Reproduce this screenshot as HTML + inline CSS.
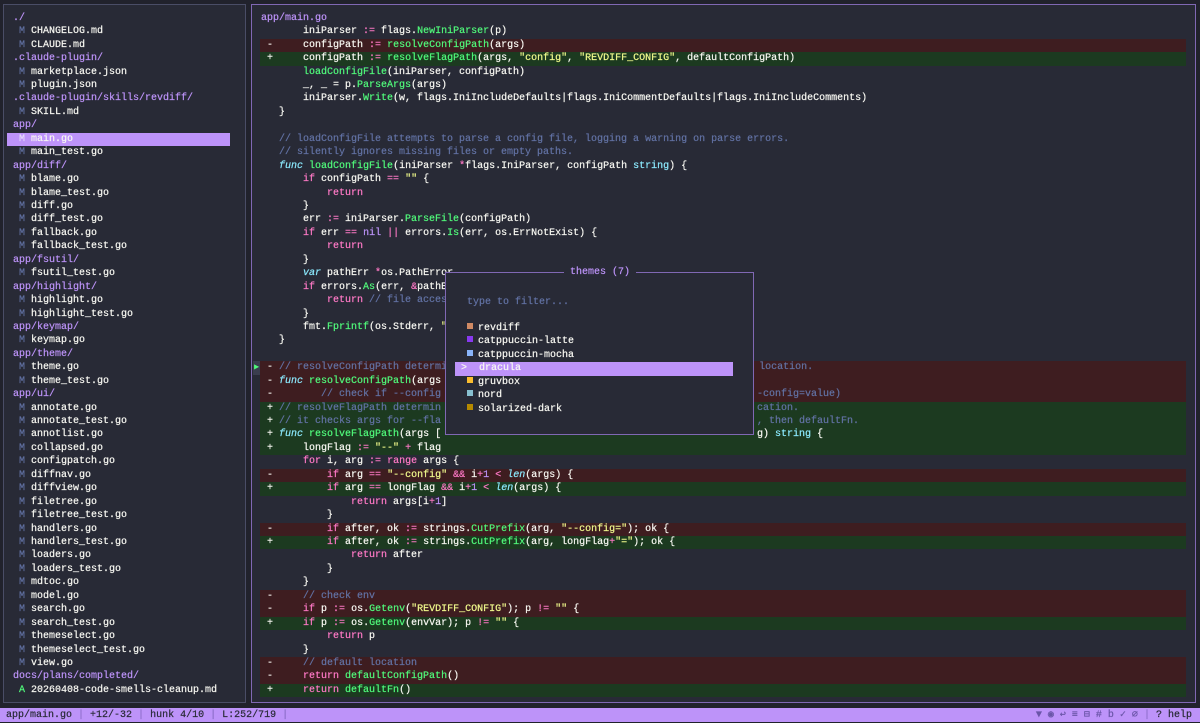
<!DOCTYPE html>
<html><head><meta charset="utf-8">
<style>
*{margin:0;padding:0;box-sizing:border-box}
body{width:1200px;height:722px;background:#21222c;position:relative;overflow:hidden;font-family:"Liberation Mono","DejaVu Sans Mono",monospace;font-size:10px;color:#f8f8f2;-webkit-text-stroke:0.2px}
.panel{position:absolute;background:#282a36}
#lp{left:3px;top:4px;width:243px;height:699px;border:1px solid #4a4d66}
#rp{left:251px;top:4px;width:945px;height:699px;border:1.5px solid #8068b4}
.r{position:absolute;height:13.44px;line-height:13.44px;white-space:pre;margin-top:1.5px}
.lr{left:7px;width:223px;padding-left:6px}
.cr{left:260px;width:926px;padding-left:1px}
.del{background:#3e1d20}
.add{background:#1c3a20}
.sel{background:#bd93f9;color:#f8f8f2}
.d{color:#bd93f9}
.m{color:#6272a4}
.a{color:#50fa7b}
.k{color:#ff79c6}
.f{color:#50fa7b}
.s{color:#f1fa8c}
.c{color:#6272a4}
.t{color:#8be9fd;font-style:italic}
.ty{color:#8be9fd}
.n{color:#bd93f9}
.suf{position:absolute;top:0}
#pop{position:absolute;left:445px;top:272px;width:309px;height:163px;border:1px solid #8068b4;background:#282a36}
#pt{position:absolute;left:118px;top:-7px;padding:0 6px;background:#282a36;color:#bd93f9;line-height:13px}
.pi{position:absolute;left:9px;width:278px;height:13.44px;line-height:13.44px;white-space:pre;margin-top:1.5px}
.sq{display:inline-block;width:6px;height:6px;margin:0 5px 0 12px;vertical-align:1px}
#sb{position:absolute;left:0;top:708px;width:1200px;height:14px;background:#bd93f9;color:#282a36;line-height:15px;white-space:pre}
</style></head><body>
<div class="panel" id="lp"></div>
<div class="panel" id="rp"></div>

<!-- left tree -->
<div class="r lr d" style="top:10.3px">./</div>
<div class="r lr" style="top:23.7px"> <span class="m">M</span> CHANGELOG.md</div>
<div class="r lr" style="top:37.2px"> <span class="m">M</span> CLAUDE.md</div>
<div class="r lr d" style="top:50.6px">.claude-plugin/</div>
<div class="r lr" style="top:64.1px"> <span class="m">M</span> marketplace.json</div>
<div class="r lr" style="top:77.5px"> <span class="m">M</span> plugin.json</div>
<div class="r lr d" style="top:90.9px">.claude-plugin/skills/revdiff/</div>
<div class="r lr" style="top:104.4px"> <span class="m">M</span> SKILL.md</div>
<div class="r lr d" style="top:117.8px">app/</div>
<div class="r lr sel" style="top:131.3px"> <span style="color:#e6dcfb">M</span> main.go</div>
<div class="r lr" style="top:144.7px"> <span class="m">M</span> main_test.go</div>
<div class="r lr d" style="top:158.1px">app/diff/</div>
<div class="r lr" style="top:171.6px"> <span class="m">M</span> blame.go</div>
<div class="r lr" style="top:185.0px"> <span class="m">M</span> blame_test.go</div>
<div class="r lr" style="top:198.5px"> <span class="m">M</span> diff.go</div>
<div class="r lr" style="top:211.9px"> <span class="m">M</span> diff_test.go</div>
<div class="r lr" style="top:225.3px"> <span class="m">M</span> fallback.go</div>
<div class="r lr" style="top:238.8px"> <span class="m">M</span> fallback_test.go</div>
<div class="r lr d" style="top:252.2px">app/fsutil/</div>
<div class="r lr" style="top:265.7px"> <span class="m">M</span> fsutil_test.go</div>
<div class="r lr d" style="top:279.1px">app/highlight/</div>
<div class="r lr" style="top:292.5px"> <span class="m">M</span> highlight.go</div>
<div class="r lr" style="top:306.0px"> <span class="m">M</span> highlight_test.go</div>
<div class="r lr d" style="top:319.4px">app/keymap/</div>
<div class="r lr" style="top:332.9px"> <span class="m">M</span> keymap.go</div>
<div class="r lr d" style="top:346.3px">app/theme/</div>
<div class="r lr" style="top:359.7px"> <span class="m">M</span> theme.go</div>
<div class="r lr" style="top:373.2px"> <span class="m">M</span> theme_test.go</div>
<div class="r lr d" style="top:386.6px">app/ui/</div>
<div class="r lr" style="top:400.1px"> <span class="m">M</span> annotate.go</div>
<div class="r lr" style="top:413.5px"> <span class="m">M</span> annotate_test.go</div>
<div class="r lr" style="top:426.9px"> <span class="m">M</span> annotlist.go</div>
<div class="r lr" style="top:440.4px"> <span class="m">M</span> collapsed.go</div>
<div class="r lr" style="top:453.8px"> <span class="m">M</span> configpatch.go</div>
<div class="r lr" style="top:467.3px"> <span class="m">M</span> diffnav.go</div>
<div class="r lr" style="top:480.7px"> <span class="m">M</span> diffview.go</div>
<div class="r lr" style="top:494.1px"> <span class="m">M</span> filetree.go</div>
<div class="r lr" style="top:507.6px"> <span class="m">M</span> filetree_test.go</div>
<div class="r lr" style="top:521.0px"> <span class="m">M</span> handlers.go</div>
<div class="r lr" style="top:534.5px"> <span class="m">M</span> handlers_test.go</div>
<div class="r lr" style="top:547.9px"> <span class="m">M</span> loaders.go</div>
<div class="r lr" style="top:561.3px"> <span class="m">M</span> loaders_test.go</div>
<div class="r lr" style="top:574.8px"> <span class="m">M</span> mdtoc.go</div>
<div class="r lr" style="top:588.2px"> <span class="m">M</span> model.go</div>
<div class="r lr" style="top:601.7px"> <span class="m">M</span> search.go</div>
<div class="r lr" style="top:615.1px"> <span class="m">M</span> search_test.go</div>
<div class="r lr" style="top:628.5px"> <span class="m">M</span> themeselect.go</div>
<div class="r lr" style="top:642.0px"> <span class="m">M</span> themeselect_test.go</div>
<div class="r lr" style="top:655.4px"> <span class="m">M</span> view.go</div>
<div class="r lr d" style="top:668.9px">docs/plans/completed/</div>
<div class="r lr" style="top:682.3px"> <span class="a">A</span> 20260408-code-smells-cleanup.md</div>

<!-- code -->
<div class="r cr d" style="top:10.3px">app/main.go</div>
<div class="r cr" style="top:23.7px">       iniParser <span class="k">:=</span> flags.<span class="f">NewIniParser</span>(p)</div>
<div class="r cr del" style="top:37.2px"> -     configPath <span class="k">:=</span> <span class="f">resolveConfigPath</span>(args)</div>
<div class="r cr add" style="top:50.6px"> +     configPath <span class="k">:=</span> <span class="f">resolveFlagPath</span>(args, <span class="s">"config"</span>, <span class="s">"REVDIFF_CONFIG"</span>, defaultConfigPath)</div>
<div class="r cr" style="top:64.1px">       <span class="f">loadConfigFile</span>(iniParser, configPath)</div>
<div class="r cr" style="top:77.5px">       _, _ = p.<span class="f">ParseArgs</span>(args)</div>
<div class="r cr" style="top:90.9px">       iniParser.<span class="f">Write</span>(w, flags.IniIncludeDefaults|flags.IniCommentDefaults|flags.IniIncludeComments)</div>
<div class="r cr" style="top:104.4px">   }</div>
<div class="r cr c" style="top:131.3px">   // loadConfigFile attempts to parse a config file, logging a warning on parse errors.</div>
<div class="r cr c" style="top:144.7px">   // silently ignores missing files or empty paths.</div>
<div class="r cr" style="top:158.1px">   <span class="t">func</span> <span class="f">loadConfigFile</span>(iniParser <span class="k">*</span>flags.IniParser, configPath <span class="ty">string</span>) {</div>
<div class="r cr" style="top:171.6px">       <span class="k">if</span> configPath <span class="k">==</span> <span class="s">""</span> {</div>
<div class="r cr" style="top:185.0px">           <span class="k">return</span></div>
<div class="r cr" style="top:198.5px">       }</div>
<div class="r cr" style="top:211.9px">       err <span class="k">:=</span> iniParser.<span class="f">ParseFile</span>(configPath)</div>
<div class="r cr" style="top:225.3px">       <span class="k">if</span> err <span class="k">==</span> <span class="n">nil</span> <span class="k">||</span> errors.<span class="f">Is</span>(err, os.ErrNotExist) {</div>
<div class="r cr" style="top:238.8px">           <span class="k">return</span></div>
<div class="r cr" style="top:252.2px">       }</div>
<div class="r cr" style="top:265.7px">       <span class="t">var</span> pathErr <span class="k">*</span>os.PathError</div>
<div class="r cr" style="top:279.1px">       <span class="k">if</span> errors.<span class="f">As</span>(err, <span class="k">&amp;</span>pathErr) {</div>
<div class="r cr" style="top:292.5px">           <span class="k">return</span> <span class="c">// file access error</span></div>
<div class="r cr" style="top:306.0px">       }</div>
<div class="r cr" style="top:319.4px">       fmt.<span class="f">Fprintf</span>(os.Stderr, <span class="s">"warning: %v"</span>, err)</div>
<div class="r cr" style="top:332.9px">   }</div>
<div style="position:absolute;left:253px;top:361.2px;width:7px;height:13.44px;background:#3a3d4e;color:#50fa7b;font-size:8px;line-height:13.44px;text-align:center">▶</div>
<div class="r cr del" style="top:359.7px"> - <span class="c">// resolveConfigPath determines the config file path from args, env, or default location.</span></div>
<div class="r cr del" style="top:373.2px"> - <span class="t">func</span> <span class="f">resolveConfigPath</span>(args []<span class="ty">string</span>) <span class="ty">string</span> {</div>
<div class="r cr del" style="top:386.6px"> -        <span class="c">// check if --config wa</span><span class="c suf" style="left:497px">-config=value)</span></div>
<div class="r cr add" style="top:400.1px"> + <span class="c">// resolveFlagPath determin</span><span class="c suf" style="left:497px">cation.</span></div>
<div class="r cr add" style="top:413.5px"> + <span class="c">// it checks args for --fla</span><span class="c suf" style="left:497px">, then defaultFn.</span></div>
<div class="r cr add" style="top:426.9px"> + <span class="t">func</span> <span class="f">resolveFlagPath</span>(args [<span class="suf" style="left:497px">g) <span class="ty">string</span> {</span></div>
<div class="r cr add" style="top:440.4px"> +     longFlag <span class="k">:=</span> <span class="s">"--"</span> <span class="k">+</span> flag</div>
<div class="r cr" style="top:453.8px">       <span class="k">for</span> i, arg <span class="k">:=</span> <span class="k">range</span> args {</div>
<div class="r cr del" style="top:467.3px"> -         <span class="k">if</span> arg <span class="k">==</span> <span class="s">"--config"</span> <span class="k">&amp;&amp;</span> i<span class="k">+</span><span class="n">1</span> <span class="k">&lt;</span> <span class="t">len</span>(args) {</div>
<div class="r cr add" style="top:480.7px"> +         <span class="k">if</span> arg <span class="k">==</span> longFlag <span class="k">&amp;&amp;</span> i<span class="k">+</span><span class="n">1</span> <span class="k">&lt;</span> <span class="t">len</span>(args) {</div>
<div class="r cr" style="top:494.1px">               <span class="k">return</span> args[i<span class="k">+</span><span class="n">1</span>]</div>
<div class="r cr" style="top:507.6px">           }</div>
<div class="r cr del" style="top:521.0px"> -         <span class="k">if</span> after, ok <span class="k">:=</span> strings.<span class="f">CutPrefix</span>(arg, <span class="s">"--config="</span>); ok {</div>
<div class="r cr add" style="top:534.5px"> +         <span class="k">if</span> after, ok <span class="k">:=</span> strings.<span class="f">CutPrefix</span>(arg, longFlag<span class="k">+</span><span class="s">"="</span>); ok {</div>
<div class="r cr" style="top:547.9px">               <span class="k">return</span> after</div>
<div class="r cr" style="top:561.3px">           }</div>
<div class="r cr" style="top:574.8px">       }</div>
<div class="r cr del" style="top:588.2px"> -     <span class="c">// check env</span></div>
<div class="r cr del" style="top:601.7px"> -     <span class="k">if</span> p <span class="k">:=</span> os.<span class="f">Getenv</span>(<span class="s">"REVDIFF_CONFIG"</span>); p <span class="k">!=</span> <span class="s">""</span> {</div>
<div class="r cr add" style="top:615.1px"> +     <span class="k">if</span> p <span class="k">:=</span> os.<span class="f">Getenv</span>(envVar); p <span class="k">!=</span> <span class="s">""</span> {</div>
<div class="r cr" style="top:628.5px">           <span class="k">return</span> p</div>
<div class="r cr" style="top:642.0px">       }</div>
<div class="r cr del" style="top:655.4px"> -     <span class="c">// default location</span></div>
<div class="r cr del" style="top:668.9px"> -     <span class="k">return</span> <span class="f">defaultConfigPath</span>()</div>
<div class="r cr add" style="top:682.3px"> +     <span class="k">return</span> <span class="f">defaultFn</span>()</div>

<!-- popup -->
<div id="pop">
  <div id="pt">themes (7)</div>
  <div class="pi c" style="top:21px;left:21px">type to filter...</div>
  <div class="pi" style="top:47.4px"><span class="sq" style="background:#d08a64"></span>revdiff</div>
  <div class="pi" style="top:60.9px"><span class="sq" style="background:#8839ef"></span>catppuccin-latte</div>
  <div class="pi" style="top:74.3px"><span class="sq" style="background:#89b4fa"></span>catppuccin-mocha</div>
  <div class="pi" style="top:87.7px;background:#bd93f9;color:#f8f8f2"> &gt;  dracula</div>
  <div class="pi" style="top:101.2px"><span class="sq" style="background:#fabd2f"></span>gruvbox</div>
  <div class="pi" style="top:114.6px"><span class="sq" style="background:#88c0d0"></span>nord</div>
  <div class="pi" style="top:128.1px"><span class="sq" style="background:#b58900"></span>solarized-dark</div>
</div>

<div id="sb"> app/main.go <span style="color:#8a6cc8">|</span> +12/-32 <span style="color:#8a6cc8">|</span> hunk 4/10 <span style="color:#8a6cc8">|</span> L:252/719 <span style="color:#8a6cc8">|</span><span style="position:absolute;right:8px;top:0"><span style="color:#6a55a8">▼ ◉ ↩ ≡ ⊟ # b ✓ ∅</span> <span style="color:#8a6cc8">|</span> ? help</span></div>
</body></html>
